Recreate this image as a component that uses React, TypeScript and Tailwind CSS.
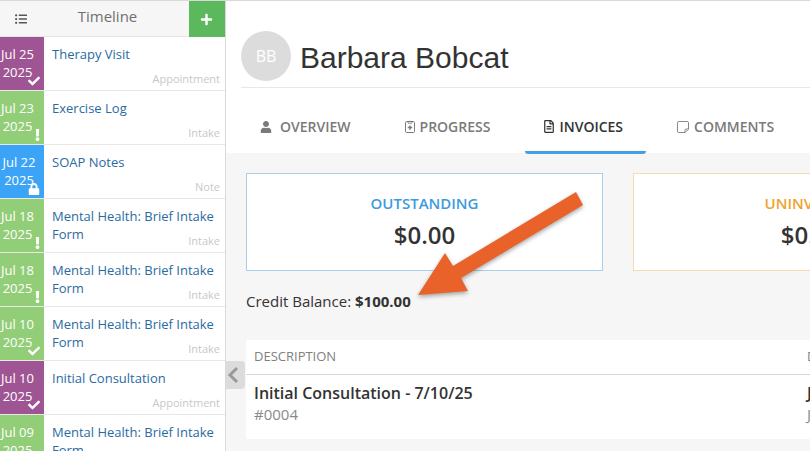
import type { ReactNode } from "react";
import clsx from "clsx";
import { FaCheck, FaExclamation, FaListUl, FaLock, FaPlus, FaRegFileAlt, FaUser } from "react-icons/fa";

type Kind = "Appointment" | "Intake" | "Note";
type Status = "done" | "pending" | "locked";

type Entry = { day: string; year: string; title: string; kind: Kind; status: Status };

const ENTRIES: Entry[] = [
  { day: "Jul 25", year: "2025", title: "Therapy Visit", kind: "Appointment", status: "done" },
  { day: "Jul 23", year: "2025", title: "Exercise Log", kind: "Intake", status: "pending" },
  { day: "Jul 22", year: "2025", title: "SOAP Notes", kind: "Note", status: "locked" },
  { day: "Jul 18", year: "2025", title: "Mental Health: Brief Intake Form", kind: "Intake", status: "pending" },
  { day: "Jul 18", year: "2025", title: "Mental Health: Brief Intake Form", kind: "Intake", status: "pending" },
  { day: "Jul 10", year: "2025", title: "Mental Health: Brief Intake Form", kind: "Intake", status: "done" },
  { day: "Jul 10", year: "2025", title: "Initial Consultation", kind: "Appointment", status: "done" },
  { day: "Jul 09", year: "2025", title: "Mental Health: Brief Intake Form", kind: "Intake", status: "done" },
];

const KIND_COLOR: Record<Kind, string> = {
  Appointment: "bg-[#9f5593] pr-[9px]",
  Intake: "bg-[#92cd78] pr-[9px]",
  Note: "bg-[#3ba4f7] pr-[6px]",
};

const STATUS_ICON: Record<Status, ReactNode> = {
  done: <FaCheck className="size-3" />,
  pending: <FaExclamation className="h-3 w-[5px]" />,
  locked: <FaLock className="size-3" />,
};

function ClipboardPlus() {
  return (
    <svg viewBox="0 0 10 13" className="h-[13px] w-[10px]" fill="none" stroke="currentColor" aria-hidden="true">
      <rect x="0.5" y="1.5" width="9" height="11" rx="1.2" />
      <path d="M3 3.2V1.6h1.1a1 1 0 0 1 1.8 0H7v1.6z" strokeWidth="0.8" />
      <path d="M5 5.4v4.4M2.8 7.6h4.4" strokeWidth="1.5" />
    </svg>
  );
}

// Sheet outline with a folded bottom-right corner
function NoteSheet() {
  return (
    <svg viewBox="0 0 12 12" className="size-3" fill="none" stroke="currentColor" strokeWidth="0.9" aria-hidden="true">
      <path d="M1.8.5h8.4a1.3 1.3 0 0 1 1.3 1.3v6.4l-3.3 3.3H1.8a1.3 1.3 0 0 1-1.3-1.3V1.8A1.3 1.3 0 0 1 1.8.5z" />
      <path d="M8 11.3V9a1 1 0 0 1 1-1h2.3" />
    </svg>
  );
}

const TABS = [
  { label: "OVERVIEW", icon: <FaUser className="size-3" />, gap: "gap-2" },
  { label: "PROGRESS", icon: <ClipboardPlus />, gap: "gap-[5px]" },
  { label: "INVOICES", icon: <FaRegFileAlt className="h-[13px] w-[10px]" />, gap: "gap-[5px]", active: true },
  { label: "COMMENTS", icon: <NoteSheet />, gap: "gap-[5px]" },
];

function TimelineItem({ entry }: { entry: Entry }) {
  return (
    <li className="flex h-[54px] border-b border-[#e8e8e8]">
      <div
        className={clsx(
          "relative w-11 shrink-0 pt-2 text-center text-[13px] leading-[18px] whitespace-nowrap text-white",
          KIND_COLOR[entry.kind],
        )}
      >
        <p>{entry.day}</p>
        <p>{entry.year}</p>
        <span className="absolute right-1 bottom-[3px]">{STATUS_ICON[entry.status]}</span>
      </div>
      <div className="relative min-w-0 flex-1 pt-2 pr-1 pl-2 text-[13px] leading-[18px]">
        <a href="#" className="text-[#2a6b9f]">
          {entry.title}
        </a>
        <span className="absolute right-[5px] bottom-[3px] text-[11px] leading-4 text-[#c8c8c8]">{entry.kind}</span>
      </div>
    </li>
  );
}

function Timeline() {
  return (
    <aside className="w-[226px] shrink-0 overflow-hidden border-r border-[#d9d9d9] bg-white">
      <header className="flex h-9 border-b border-[#e5e5e5] bg-[#f6f6f6]">
        <button type="button" aria-label="List view" className="w-11 pl-[15px] text-[#555]">
          <FaListUl className="size-3" />
        </button>
        <h2 className="flex-1 pr-[18px] text-center text-[15px] leading-[30px] text-[#707070]">Timeline</h2>
        <button
          type="button"
          aria-label="Add entry"
          className="flex h-9 w-9 items-center justify-center bg-[#5cb85c] pr-0.5 text-white"
        >
          <FaPlus className="size-[13px]" />
        </button>
      </header>
      <ul>
        {ENTRIES.map((entry, i) => (
          <TimelineItem key={i} entry={entry} />
        ))}
      </ul>
    </aside>
  );
}

function SummaryCard({ label, amount, border, color }: { label: string; amount: string; border: string; color: string }) {
  return (
    <div className={clsx("h-[98px] w-[357px] shrink-0 border bg-white pt-[19px] text-center", border)}>
      <h3 className={clsx("text-[15px] leading-5 font-semibold", color)}>{label}</h3>
      <p className="mt-1.5 text-2xl leading-8 font-semibold text-[#333]">{amount}</p>
    </div>
  );
}

// Callout pointing at the credit balance
function Callout() {
  return (
    <svg
      viewBox="0 0 172 112"
      className="pointer-events-none absolute top-[188px] left-[190px] h-[112px] w-[172px] drop-shadow-[0_2px_2px_rgba(0,0,0,0.35)]"
      aria-hidden="true"
    >
      <path d="M2 106 29 64 37 77 160 3 167 16 45 89 52 102z" fill="#e8622a" />
    </svg>
  );
}

export default function App() {
  return (
    <div className="flex h-screen overflow-hidden border-t border-[#d9d9d9] font-['Open_Sans',sans-serif] text-[#333]">
      <Timeline />
      <main className="relative min-w-0 flex-1 overflow-hidden bg-[#f6f6f6]">
        <div className="bg-white pl-[15px]">
          <div className="flex items-center gap-[9px] border-b border-[#e8e8e8] pt-[30px] pb-[6px]">
            <div className="flex size-[50px] items-center justify-center rounded-full bg-[#dcdcdc] text-base text-white">
              BB
            </div>
            <h1 className="pt-1 font-['Liberation_Sans',sans-serif] text-[30px] leading-9">Barbara Bobcat</h1>
          </div>
          <nav className="flex gap-3 pt-[14px] whitespace-nowrap">
            {TABS.map((tab) => (
              <a
                key={tab.label}
                href="#"
                aria-current={tab.active ? "page" : undefined}
                className={clsx(
                  "relative flex h-[51px] shrink-0 items-center pr-[23px] pb-0.5 pl-[19px] text-sm font-semibold",
                  tab.gap,
                  tab.active ? "text-[#333]" : "text-[#7a7a7a]",
                )}
              >
                {tab.icon}
                {tab.label}
                {tab.active && <span className="absolute inset-x-0 -bottom-px h-[3px] rounded-b-sm bg-[#459fe5]" />}
              </a>
            ))}
          </nav>
        </div>

        <div className="pt-5 pl-5">
          <div className="flex gap-[30px]">
            <SummaryCard label="OUTSTANDING" amount="$0.00" border="border-[#a9d0ea]" color="text-[#3d9bdc]" />
            <SummaryCard label="UNINVOICED" amount="$0.00" border="border-[#f8dcb0]" color="text-[#f0a32f]" />
          </div>
          <p className="mt-5 text-[15px] leading-5">
            Credit Balance: <strong>$100.00</strong>
          </p>
          <table className="mt-[29px] w-[1000px] table-fixed bg-white text-left">
            <thead>
              <tr className="h-[34px] border-b border-[#d8d8d8] text-[13px] text-[#808080]">
                <th className="w-[553px] px-2 font-normal">DESCRIPTION</th>
                <th className="px-2 font-normal">DATE</th>
              </tr>
            </thead>
            <tbody>
              <tr className="h-[65px] align-top text-[15px]">
                <td className="px-2 pt-[7px]">
                  <p className="text-base leading-[22px] font-semibold">Initial Consultation - 7/10/25</p>
                  <p className="leading-5 text-[#8a8a8a]">#0004</p>
                </td>
                <td className="px-2 pt-[7px]">
                  <p className="text-base leading-[22px] font-semibold">Jul 10, 2025</p>
                  <p className="leading-5 text-[#8a8a8a]">Jul 10, 2025</p>
                </td>
              </tr>
            </tbody>
          </table>
        </div>

        <button
          type="button"
          aria-label="Collapse timeline"
          className="absolute top-[360px] left-0 flex h-7 w-[19px] items-center rounded-r-sm bg-[#dcdcdc] pl-px text-[#999]"
        >
          <svg viewBox="0 0 12 18" className="h-[18px] w-3" fill="none" stroke="currentColor" strokeWidth="3" aria-hidden="true">
            <path d="M10 2 3 9l7 7" />
          </svg>
        </button>
        <Callout />
      </main>
    </div>
  );
}
